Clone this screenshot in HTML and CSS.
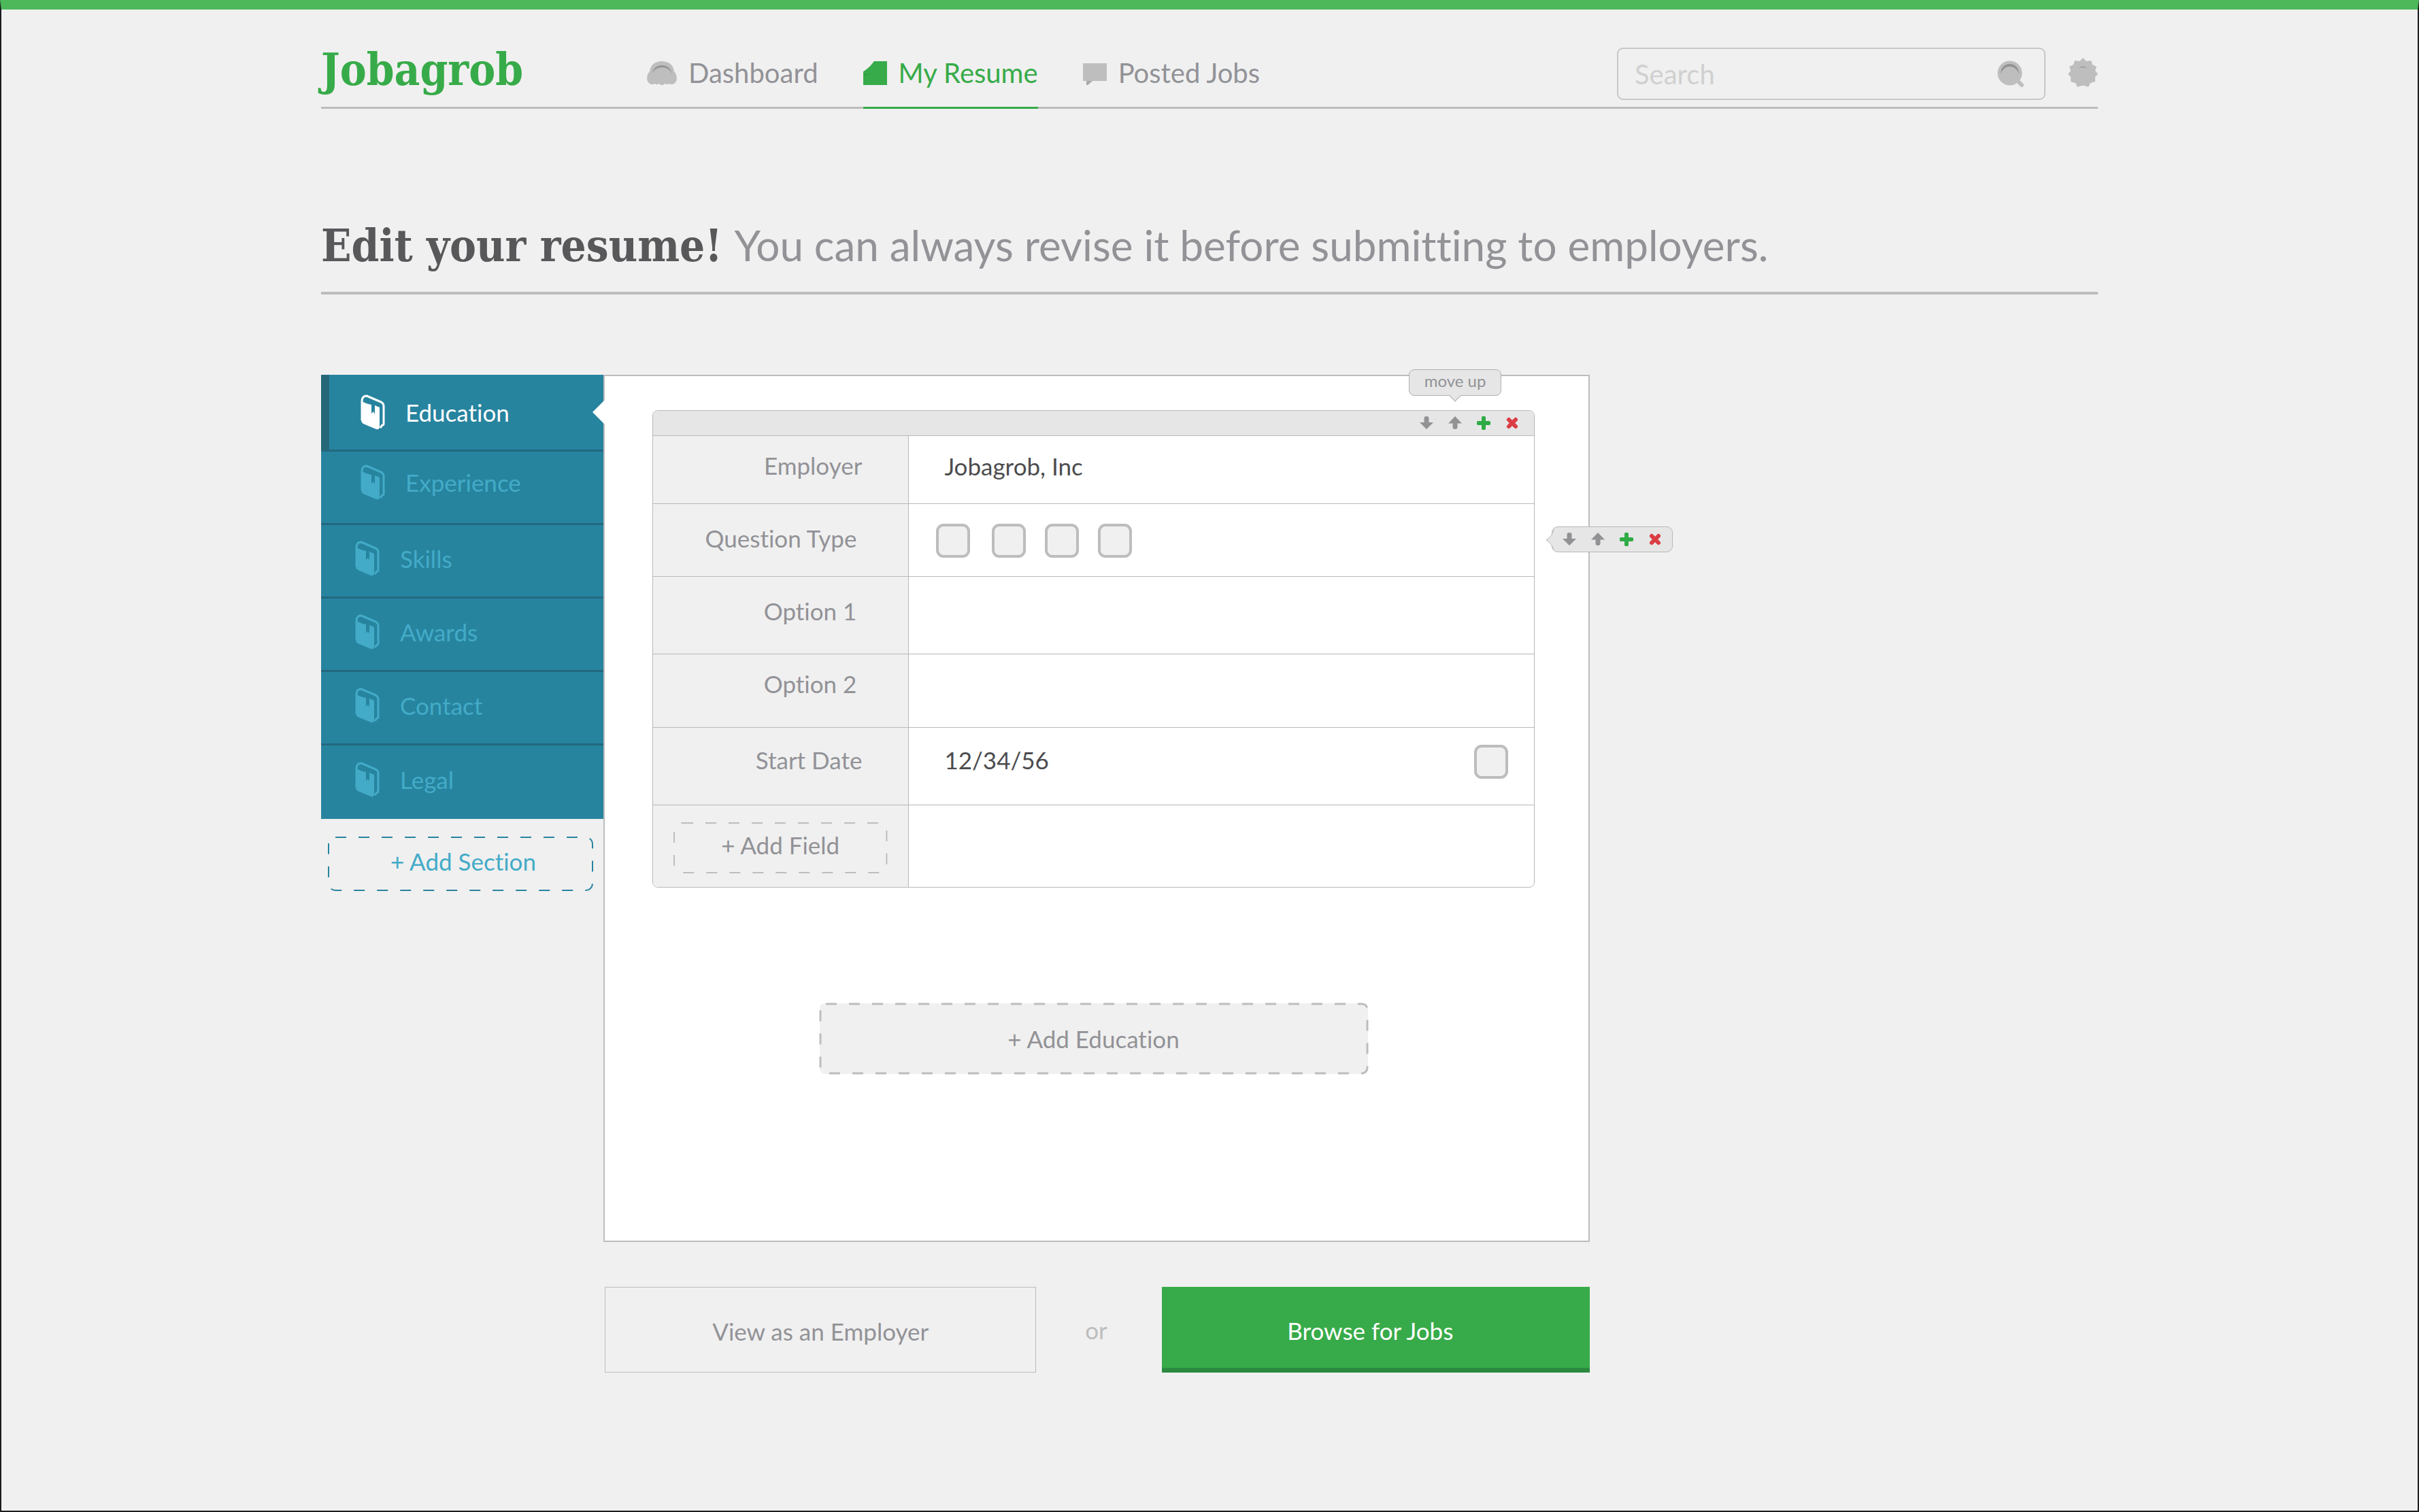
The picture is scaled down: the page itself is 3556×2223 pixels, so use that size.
FILE: index.html
```html
<!DOCTYPE html>
<html lang="en">
<head>
<meta charset="utf-8">
<meta name="viewport" content="width=device-width, initial-scale=1">
<title>Jobagrob – My Resume</title>
<link rel="stylesheet" href="styles.css">
</head>
<body>
<svg class="sprite" aria-hidden="true">
  <symbol id="book" viewBox="0 0 36 52">
    <path d="M2 38V10Q2 2 9 2L30 11Q34 13 34 17V43Q34 45 32 45L29 49" fill="none" stroke="currentColor" stroke-width="3" stroke-linejoin="round"/>
    <path d="M1 9Q6 13 16 15V28L19 25L21 29V16L28 19V49Q27 52 23 51L4 43Q1 41 1 38Z" fill="currentColor"/>
  </symbol>
  <symbol id="down" viewBox="0 0 20 20"><path d="M6.500 3Q6.500 0 10 0Q13.500 0 13.500 3V9H20L10 19L0 9H6.500Z" fill="#929294"/></symbol>
  <symbol id="up" viewBox="0 0 20 20"><path d="M10 0L20 10.500H13.500V16Q13.500 19 10 19Q6.500 19 6.500 16V10.500H0Z" fill="#929294"/></symbol>
  <symbol id="plus" viewBox="0 0 20 20"><path d="M10 2.500V17.500M2.500 10H17.500" stroke="#2fab45" stroke-width="6" stroke-linecap="round"/></symbol>
  <symbol id="cross" viewBox="0 0 20 20"><path d="M5 5L15 15M15 5L5 15" stroke="#db3d45" stroke-width="6" stroke-linecap="round"/></symbol>
</svg>

<div class="page">
  <header class="header">
    <a class="logo" href="#">Jobagrob</a>
    <nav class="nav">
      <a class="nav-link" href="#">
        <svg class="nav-icon wide" viewBox="0 0 44 36"><path d="M4 16C5 6 13 1 22 1S39 6 40 16C45 21 45 30 41 33C38 36 34 35 32 34C29 36 27 34 26 34C24 37 20 37 18 34C16 35 14 36 12 34C9 35 6 36 3 33C-1 30-1 21 4 16Z" fill="#bebebe"/><path d="M8 19C10 3 34 3 37 20C32 7 13 7 8 19Z" fill="#929294"/></svg>
        Dashboard
      </a>
      <a class="nav-link active" href="#">
        <svg class="nav-icon" viewBox="0 0 35 36"><path d="M16 1H35V36H0V16Q9 11 16 1Z" fill="#37ab49"/><path d="M0 22Q2 19 16 19Q8 19 0 22Z" fill="#2b8a40"/></svg>
        My Resume
      </a>
      <a class="nav-link" href="#">
        <svg class="nav-icon" viewBox="0 0 35 36"><path d="M0 4H35V30H14L5 36V30H0Z" fill="#bebebe"/><path d="M5 30H14L5 38Z" fill="#aaa"/></svg>
        Posted Jobs
      </a>
    </nav>
    <form class="search">
      <input class="search-input" type="search" placeholder="Search" aria-label="Search">
      <button class="icon-button" type="button" aria-label="Search">
        <svg class="icon-search" viewBox="0 0 40 40"><path d="M29 29L36 36" stroke="#bebebe" stroke-width="6" stroke-linecap="round"/><circle cx="18.500" cy="18.500" r="18" fill="#bebebe"/><path d="M5 20C5 0 32 0 32 20C27 5 10 5 5 20Z" fill="#929294"/></svg>
      </button>
    </form>
    <button class="icon-button settings" type="button" aria-label="Settings">
      <svg class="icon-gear" viewBox="0 0 44 44"><path d="M22 0L27 5L34 4L36 10L42 13L40 19L44 24L40 28L40 35L33 37L30 43L24 41L20 41L14 43L11 37L4 35L4 28L0 24L4 19L2 13L8 10L10 4L17 5Z" fill="#bebebe"/><path d="M15 16Q22 9 29 16Q22 12 15 16Z" fill="#929294"/></svg>
    </button>
  </header>

  <h1 class="title"><b class="title-main">Edit your resume!</b> You can always revise it before submitting to employers.</h1>

  <main class="workspace">
    <aside class="sidebar">
      <nav class="sections">
        <a class="section active" href="#"><svg class="book"><use href="#book"/></svg>Education</a>
        <a class="section inset" href="#"><svg class="book"><use href="#book"/></svg>Experience</a>
        <a class="section" href="#"><svg class="book"><use href="#book"/></svg>Skills</a>
        <a class="section" href="#"><svg class="book"><use href="#book"/></svg>Awards</a>
        <a class="section" href="#"><svg class="book"><use href="#book"/></svg>Contact</a>
        <a class="section" href="#"><svg class="book"><use href="#book"/></svg>Legal</a>
      </nav>
      <button class="dashed add-section" type="button"><svg class="dash"><rect width="100%" height="100%" rx="10"/></svg>+ Add Section</button>
    </aside>

    <div class="content">
      <section class="panel">
        <form class="entry">
          <div class="entry-bar">
            <button class="tool" type="button" aria-label="Move down"><svg><use href="#down"/></svg></button>
            <button class="tool" type="button" aria-label="Move up"><svg><use href="#up"/></svg><span class="tooltip">move up</span></button>
            <button class="tool" type="button" aria-label="Add"><svg><use href="#plus"/></svg></button>
            <button class="tool" type="button" aria-label="Remove"><svg><use href="#cross"/></svg></button>
          </div>
          <div class="row">
            <label class="name" for="employer">Employer</label>
            <div class="value"><input class="text" id="employer" type="text" value="Jobagrob, Inc"></div>
          </div>
          <div class="row low sub">
            <span class="name" id="qtype">Question Type</span>
            <div class="value choices" role="group" aria-labelledby="qtype">
              <input class="tick first" type="checkbox" aria-label="Type 1">
              <input class="tick" type="checkbox" aria-label="Type 2">
              <input class="tick" type="checkbox" aria-label="Type 3">
              <input class="tick" type="checkbox" aria-label="Type 4">
            </div>
            <div class="row-tools">
              <svg class="row-tools-tip" viewBox="0 0 12 30"><path d="M12 0Q10 9 1 15Q10 21 12 30" fill="#e6e6e6" stroke="#b8b8b8"/></svg>
              <button class="tool" type="button" aria-label="Move down"><svg><use href="#down"/></svg></button>
              <button class="tool" type="button" aria-label="Move up"><svg><use href="#up"/></svg></button>
              <button class="tool" type="button" aria-label="Add"><svg><use href="#plus"/></svg></button>
              <button class="tool" type="button" aria-label="Remove"><svg><use href="#cross"/></svg></button>
            </div>
          </div>
          <div class="row low sub">
            <label class="name" for="option1">Option 1</label>
            <div class="value"><input class="text" id="option1" type="text"></div>
          </div>
          <div class="row sub">
            <label class="name" for="option2">Option 2</label>
            <div class="value"><input class="text" id="option2" type="text"></div>
          </div>
          <div class="row tall">
            <label class="name" for="start">Start Date</label>
            <div class="value date"><input class="text" id="start" type="text" value="12/34/56"><input class="tick" type="checkbox" aria-label="Pick a date"></div>
          </div>
          <div class="row">
            <div class="name add-cell"><button class="dashed add-field" type="button"><svg class="dash"><rect width="100%" height="100%" rx="12"/></svg>+ Add Field</button></div>
            <div class="value"></div>
          </div>
        </form>
        <button class="dashed add-entry" type="button"><svg class="dash"><rect width="100%" height="100%" rx="8"/></svg>+ Add Education</button>
      </section>
      <div class="actions">
        <button class="action view" type="button">View as an Employer</button>
        <span class="or">or</span>
        <button class="action browse" type="button">Browse for Jobs</button>
      </div>
    </div>
  </main>
</div>
</body>
</html>
```
FILE: styles.css
```css
*, *::before, *::after { box-sizing: border-box; }

body {
  margin: 0;
  min-height: 100vh;
  background: #f0f0f0;
  border: 2px solid #1c1c1f;
  border-top: 14px solid #4cb85a;
  color: #929297;
  font: 35px/44px Lato, sans-serif;
  font-variant-ligatures: none;
}

a { color: inherit; text-decoration: none; }
button { padding: 0; border: 0; background: none; color: inherit; font: inherit; font-variant-ligatures: none; cursor: pointer; }
svg { display: block; }
.sprite { position: absolute; width: 0; height: 0; }

.page { max-width: 2612px; margin: 0 auto; }

/* Header */
.header { display: flex; padding-top: 42px; border-bottom: 3px solid #bdbdbd; }
.logo {
  width: 479px;
  padding-bottom: 10px;
  align-self: center;
  color: #37ab49;
  font: bold 65px/80px "DejaVu Serif Condensed", "DejaVu Serif", serif;
}
.nav { display: flex; gap: 66px; margin-bottom: -3px; font-size: 40px; }
.nav-link { display: flex; align-items: center; gap: 17px; border-bottom: 3px solid transparent; }
.nav-link.active { color: #37ab49; border-color: #37ab49; }
.nav-icon { width: 35px; height: 36px; }
.nav-icon.wide { width: 44px; }
.search {
  display: flex;
  align-items: center;
  width: 630px;
  height: 77px;
  margin: 14px 0 10px auto;
  padding: 0 29px 0 24px;
  border: 2px solid #c8c8c8;
  border-radius: 9px;
}
.search-input { flex: 1; min-width: 0; padding: 0; border: 0; outline: 0; background: none; font: 40px/48px Lato, sans-serif; }
.search-input::placeholder { color: #d0d0d0; opacity: 1; }
.icon-search { width: 40px; height: 40px; }
.settings { align-self: center; margin-left: 33px; }
.icon-gear { width: 44px; height: 44px; }

/* Page title */
.title {
  margin: 160px 0 0;
  padding-bottom: 28px;
  border-bottom: 4px solid #bdbdbd;
  font-size: 62px;
  font-weight: 400;
  line-height: 80px;
}
.title-main { margin-right: 4px; color: #58585b; font-family: "DejaVu Serif Condensed", "DejaVu Serif", serif; font-size: 65px; }

/* Workspace */
.workspace { display: grid; grid-template-columns: 415fr 1450fr 747fr; margin-top: 118px; }

.section {
  display: flex;
  align-items: center;
  gap: 30px;
  height: 108px;
  padding: 0 0 8px 50px;
  border-bottom: 3px solid #23687e;
  background: #27849f;
  color: #43abc7;
}
.section:last-child { border-bottom: 0; }
.section.inset { padding: 0 0 16px 58px; }
.section.active {
  position: relative;
  height: 113px;
  padding: 0 0 0 46px;
  border-left: 12px solid #246878;
  color: #fff;
}
.section.active::after {
  content: "";
  position: absolute;
  right: -2px;
  top: 37px;
  border: 18px solid transparent;
  border-left: 0;
  border-right-color: #fff;
  z-index: 1;
}
.book { width: 36px; height: 52px; }

/* Dashed buttons */
.dashed { position: relative; display: block; }
.dash { position: absolute; inset: 1px; width: calc(100% - 2px); height: calc(100% - 2px); overflow: visible; }
.dash rect { fill: none; stroke: #bdbdbd; stroke-width: 2; stroke-dasharray: 16 18; }
.add-section { width: calc(100% - 25px); height: 80px; margin: 26px 0 0 10px; padding: 0 0 8px 8px; color: #43abc7; }
.add-section rect { stroke: #27849f; }
.add-field { width: 100%; height: 75px; padding-bottom: 10px; }
.add-entry { width: 806px; max-width: 100%; height: 104px; margin: 170px auto 0; background: #f0f0f0; border-radius: 8px; }
.add-entry rect { stroke-width: 3; }

/* Panel */
.panel {
  min-height: 1275px;
  padding: 50px 79px 80px 70px;
  border: 2px solid #bdbdbd;
  background: #fff;
}
.entry { border: 1px solid #b8b8b8; border-radius: 8px; }
.entry-bar {
  display: flex;
  justify-content: flex-end;
  gap: 22px;
  padding: 8px 22px;
  background: #e6e6e6;
  border-radius: 7px 7px 0 0;
}
.tool { position: relative; width: 20px; height: 20px; }
.tool svg { width: 20px; height: 20px; }
.tooltip {
  position: absolute;
  left: 50%;
  bottom: 50px;
  width: 136px;
  height: 39px;
  margin-left: -68px;
  border: 1px solid #b0b0b0;
  border-radius: 8px;
  background: #e6e6e6;
  font-size: 24px;
  line-height: 32px;
}
.tooltip::after {
  content: "";
  position: absolute;
  left: 61px;
  bottom: -7px;
  width: 12px;
  height: 12px;
  border: solid #b0b0b0;
  border-width: 0 1px 1px 0;
  background: #e6e6e6;
  transform: rotate(45deg);
}
.row { position: relative; display: grid; grid-template-columns: 377fr 920fr; min-height: 100px; border-top: 1px solid #b8b8b8; }
.row.sub { min-height: 108px; }
.row.low, .row.tall { min-height: 114px; }
.row.low:nth-child(3) { min-height: 107px; }
.row:last-child { min-height: 121px; }
.name { padding: 21px 68px 0 0; border-right: 1px solid #b8b8b8; background: #f0f0f0; text-align: right; }
.low .name { padding-top: 28px; }
.tall .name { padding-top: 25px; }
.sub .name { padding-right: 76px; }
.row .add-cell { padding: 25px 31px 0 30px; text-align: center; }
.row:last-child .name { border-bottom-left-radius: 7px; }
.value { display: flex; align-items: flex-start; padding: 22px 38px 0 52px; }
.low .value { padding-top: 29px; }
.tall .value { padding-top: 25px; }
.text { flex: 1; min-width: 0; height: 44px; padding: 0; border: 0; outline: 0; background: none; color: #4c4c4e; font: inherit; }
.tick {
  appearance: none;
  flex: none;
  width: 50px;
  height: 50px;
  margin: 0;
  border: 4px solid #bdbdbd;
  border-radius: 11px;
  background: #f0f0f0;
}
.choices { gap: 28px; padding-left: 40px; }
.tick.first { margin-right: 4px; }
.row-tools {
  position: absolute;
  left: calc(100% + 26px);
  top: 33px;
  display: flex;
  gap: 22px;
  padding: 8px 15px;
  border: 1px solid #b8b8b8;
  border-radius: 9px;
  background: #e6e6e6;
}
.row-tools-tip { position: absolute; left: -10px; top: 4px; width: 12px; height: 30px; }

/* Actions */
.actions { display: grid; grid-template-columns: 634fr 184fr 629fr; margin: 66px 0 0 2px; text-align: center; }
.action { height: 126px; }
.or { align-self: center; padding-right: 8px; color: #bdbdbd; }
.view { border: 1px solid #bdbdbd; padding-top: 4px; }
.browse { padding: 8px 16px 0 0; border-bottom: 7px solid #2b8a40; background: #37ab49; color: #fff; }
```
